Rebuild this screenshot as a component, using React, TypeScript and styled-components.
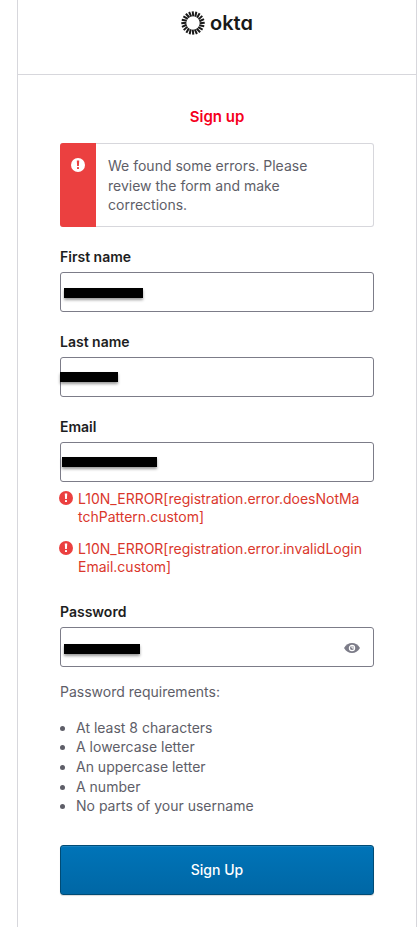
import React, { useState } from "react";
import styled, { createGlobalStyle } from "styled-components";

const GlobalStyle = createGlobalStyle`
  *, *::before, *::after { box-sizing: border-box; }
  body {
    margin: 0;
    background: #fff;
    color: #1d1d21;
    font-family: Inter, "Open Sans", sans-serif;
    font-size: 14px;
    line-height: 20px;
  }
`;

const Page = styled.main`
  min-height: 100vh;
  padding-left: 17px;
  display: flex;
`;

const Card = styled.section`
  flex: 1;
  max-width: 400px;
  margin: 0 auto;
  border: solid #d7d7dc;
  border-width: 0 1px;
`;

const Header = styled.header`
  display: flex;
  align-items: center;
  justify-content: center;
  gap: 5px;
  padding: 11px 0 39px;
  border-bottom: 1px solid #d7d7dc;
`;

const Wordmark = styled.span`
  color: #191919;
  font-size: 20px;
  line-height: 24px;
  font-weight: 600;
  font-feature-settings: "cv11";
`;

const Form = styled.form`
  padding: 32px 42px;
`;

const Title = styled.h1`
  margin: 0 0 16px;
  color: #f5001d;
  font-size: 15px;
  line-height: 20px;
  font-weight: 600;
  text-align: center;
`;

const Alert = styled.div`
  display: flex;
  margin-bottom: 20px;
  border: 1px solid #d7d7dc;
  border-left: 0;
  border-radius: 3px;
`;

const AlertMark = styled.div`
  flex: none;
  width: 36px;
  margin: -1px 0;
  padding-top: 15px;
  display: flex;
  justify-content: center;
  background: #eb4040;
  border-radius: 3px 0 0 3px;
`;

const AlertText = styled.p`
  margin: 0;
  padding: 12px 40px 11px 12px;
  color: #5e5e68;
  font-size: 14px;
  line-height: 1.4;
`;

const Field = styled.div`
  margin-bottom: 20px;
`;

const Label = styled.label`
  display: block;
  margin-bottom: 5px;
  font-weight: 600;
`;

const InputWrap = styled.div`
  position: relative;
`;

const Input = styled.input`
  display: block;
  width: 100%;
  height: 40px;
  padding: 0 40px 0 8px;
  border: 1px solid #7c7c88;
  border-radius: 3px;
  background: #fff;
  font: inherit;
`;

const Redaction = styled.span<{ $left: number; $top: number; $width: number }>`
  position: absolute;
  left: ${(p) => p.$left}px;
  top: ${(p) => p.$top}px;
  width: ${(p) => p.$width}px;
  height: 10px;
  background: #000;
  box-shadow: 0 2px 3px rgba(0, 0, 0, 0.4);
`;

const Reveal = styled.button`
  position: absolute;
  right: 12px;
  top: 11px;
  width: 20px;
  height: 20px;
  padding: 0;
  border: 0;
  background: none;
  display: grid;
  place-items: center;
  cursor: pointer;
`;

const ErrorText = styled.p`
  display: flex;
  gap: 5px;
  margin: 8px 0 0 -1px;
  color: #da372c;
  line-height: 18px;

  & + & {
    margin-top: 14px;
  }

  svg {
    margin-top: 1px;
  }
`;

const Errors = styled.div`
  margin-bottom: 26px;
`;

const Requirements = styled.section`
  margin: -5px 0 29px;
  color: #5e5e68;
`;

const RequirementsTitle = styled.p`
  margin: 0 0 16px;
`;

const RequirementList = styled.ul`
  margin: 0;
  padding-left: 16px;
  line-height: 1.4;
`;

const Submit = styled.button`
  display: block;
  width: 100%;
  height: 50px;
  border: 1px solid #004b75;
  border-radius: 3px;
  background: linear-gradient(#0074b8, #0067a5);
  box-shadow: 0 1px 1px rgba(0, 0, 0, 0.15), inset 0 1px 0 rgba(255, 255, 255, 0.1);
  color: #fff;
  font: inherit;
  font-weight: 500;
  cursor: pointer;
`;

const IconSvg = styled.svg`
  display: block;
  flex: none;
`;

const rays = Array.from({ length: 20 }, (_, i) => i * 18);

function Sunburst() {
  return (
    <IconSvg width="24" height="24" viewBox="-12 -12 24 24" aria-hidden="true">
      <g stroke="#191919" strokeWidth="2">
        {rays.map((a) => (
          <line key={a} x1="0.3" y1="-6.6" x2="-0.300" y2="-11.700" transform={`rotate(${a})`} />
        ))}
      </g>
    </IconSvg>
  );
}

function ErrorIcon({ fill, mark }: { fill: string; mark: string }) {
  return (
    <IconSvg width="14" height="14" viewBox="0 0 14 14" aria-hidden="true">
      <circle cx="7" cy="7" r="7" fill={fill} />
      <path d="M5.8 2.600h2.400l-.3 5.400H6.100z" fill={mark} />
      <rect x="6" y="9" width="2" height="2" rx=".5" fill={mark} />
    </IconSvg>
  );
}

function EyeIcon() {
  return (
    <IconSvg width="16" height="10" viewBox="0 0 16 10" aria-hidden="true">
      <path d="M0 5C2 1.8 4.8 0 8 0s6 1.8 8 5c-2 3.2-4.8 5-8 5S2 8.200 0 5z" fill="#7c7c88" />
      <circle cx="8" cy="5" r="2.600" fill="none" stroke="#fff" strokeWidth="1.200" />
      <path d="M8 3v2h2" fill="none" stroke="#fff" strokeWidth="1" />
    </IconSvg>
  );
}

type Bar = { left: number; top: number; width: number };

type TextFieldProps = {
  id: string;
  label: string;
  type?: string;
  bar: Bar;
  invalid?: boolean;
  children?: React.ReactNode;
};

function TextField({ id, label, type = "text", bar, invalid, children }: TextFieldProps) {
  return (
    <Field>
      <Label htmlFor={id}>{label}</Label>
      <InputWrap>
        <Input
          id={id}
          type={type}
          aria-invalid={invalid}
          aria-describedby={invalid ? `${id}-errors` : undefined}
        />
        <Redaction $left={bar.left} $top={bar.top} $width={bar.width} />
        {children}
      </InputWrap>
    </Field>
  );
}

const emailErrors = [
  ["L10N_ERROR[registration.error.doesNotMa", "tchPattern.custom]"],
  ["L10N_ERROR[registration.error.invalidLogin", "Email.custom]"],
];

const requirements = [
  "At least 8 characters",
  "A lowercase letter",
  "An uppercase letter",
  "A number",
  "No parts of your username",
];

const EmailGroup = styled.div`
  ${Field} {
    margin-bottom: 0;
  }
`;

export default function App() {
  const [visible, setVisible] = useState(false);
  return (
    <>
      <GlobalStyle />
      <Page>
        <Card>
          <Header>
            <Sunburst />
            <Wordmark>okta</Wordmark>
          </Header>
          <Form noValidate onSubmit={(e) => e.preventDefault()}>
            <Title>Sign up</Title>
            <Alert role="alert">
              <AlertMark>
                <ErrorIcon fill="#fff" mark="#eb4040" />
              </AlertMark>
              <AlertText>We found some errors. Please review the form and make corrections.</AlertText>
            </Alert>
            <TextField id="first" label="First name" bar={{ left: 4, top: 16, width: 79 }} />
            <TextField id="last" label="Last name" bar={{ left: 0, top: 15, width: 58 }} />
            <EmailGroup>
              <TextField id="email" label="Email" type="email" invalid bar={{ left: 2, top: 15, width: 95 }} />
              <Errors id="email-errors">
                {emailErrors.map(([start, end]) => (
                  <ErrorText key={start}>
                    <ErrorIcon fill="#eb4040" mark="#fff" />
                    <span>
                      {start}
                      <br />
                      {end}
                    </span>
                  </ErrorText>
                ))}
              </Errors>
            </EmailGroup>
            <TextField
              id="password"
              label="Password"
              type={visible ? "text" : "password"}
              bar={{ left: 4, top: 17, width: 76 }}
            >
              <Reveal type="button" aria-label="Show password" onClick={() => setVisible(!visible)}>
                <EyeIcon />
              </Reveal>
            </TextField>
            <Requirements>
              <RequirementsTitle>Password requirements:</RequirementsTitle>
              <RequirementList>
                {requirements.map((r) => (
                  <li key={r}>{r}</li>
                ))}
              </RequirementList>
            </Requirements>
            <Submit type="submit">Sign Up</Submit>
          </Form>
        </Card>
      </Page>
    </>
  );
}
